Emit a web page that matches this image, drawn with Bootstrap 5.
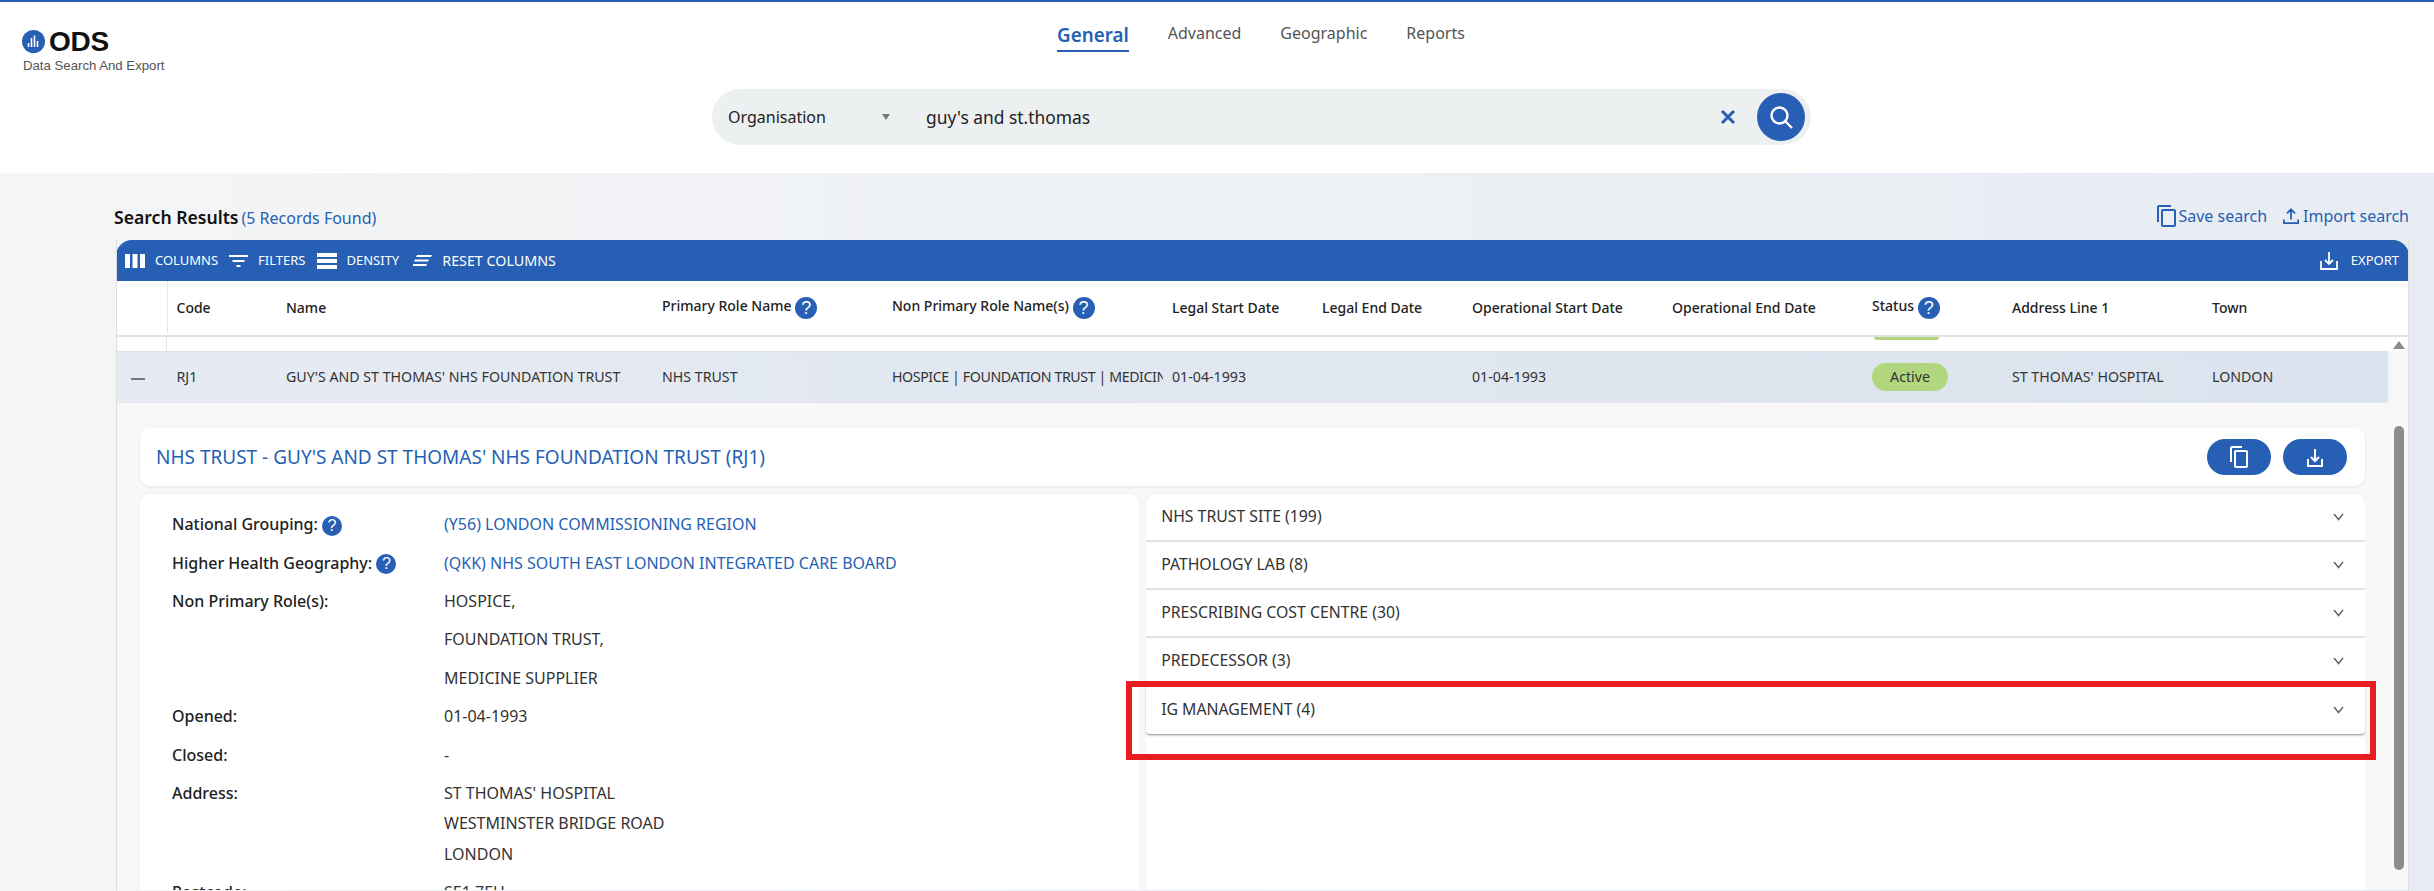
<!DOCTYPE html>
<html lang="en">
<head>
    <title>ODS Data Search And Export</title>
    <link href="https://cdn.jsdelivr.net/npm/bootstrap@5.3.0/dist/css/bootstrap.min.css" rel="stylesheet">
    <script src="https://cdn.jsdelivr.net/npm/bootstrap@5.3.0/dist/js/bootstrap.bundle.min.js"></script>
    <meta name="viewport" content="width=device-width, initial-scale=1">
    <style>
        html, body { height: 100%; overflow: hidden; }
        body {
            font-family: "Noto Sans", "Open Sans", sans-serif;
            font-size: 14px;
            color: #222;
            background: #fff;
        }
        .top-head { height: 173px; border-top: 2px solid #265fb3; position: relative; }
        .brand-box { position: absolute; left: 22px; top: 28px; }
        .brand-name { font-family: "Liberation Sans", sans-serif; font-weight: 700; font-size: 28px; line-height: 23px; color: #111; letter-spacing: -.3px; }
        .brand-sub { font-family: "Liberation Sans", sans-serif; font-size: 13.2px; color: #555; line-height: 14px; margin-top: 6px; margin-left: 1px; }
        .main-tabs { padding: 20px 0 0 88px; height: 87px; gap: 39px; }
        .main-tab { font-size: 16px; color: #555; line-height: 22px; text-decoration: none; }
        .main-tab.on { font-size: 18.8px; font-weight: 600; color: #265fb3; border-bottom: 2px solid #265fb3; height: 30px; line-height: 26px; }
        .search-pill { width: 1099px; height: 56px; border-radius: 28px; background: #edf0f1; margin-left: 712px; padding: 0 6px 0 16px; }
        .search-type { width: 198px; font-size: 16px; color: #222; }
        .search-type i { display: block; border: 4px solid transparent; border-top: 6px solid #777; border-bottom: 0; margin-right: 36px; }
        .search-text { font-size: 17.4px; color: #222; }
        .clear-icon { margin-right: 20px; }
        .search-go { width: 48px; height: 48px; border-radius: 50%; background: #265fb3; border: 0; }
        .page-body { height: 718px; padding: 0 25px 0 114px; background: linear-gradient(90deg, #f4f5f6, #e7ecf3); }
        .result-bar { height: 67px; padding-top: 31px; }
        .result-title { font-size: 17.6px; font-weight: 600; color: #111; }
        .result-count { font-size: 16px; color: #265fb3; margin-left: 3px; }
        .result-link { font-size: 16px; color: #265fb3; text-decoration: none; }
        .grid-wrap { margin-left: 2px; border-right: 1px solid #ddd; border-left: 1px solid #ddd; height: 651px; overflow: hidden; }
        .grid-tools { height: 41px; background: #265fb3; border-radius: 16px 16px 0 0; margin: 0 -1px; padding: 0 10px 0 9px; color: #fff; font-size: 13px; }
        .tool-item { margin-right: 11px; }
        .tool-item svg { margin-right: 10px; }
        .tool-item.wide { font-size: 14.3px; margin-left: 3px; }
        .export-icon { margin-right: 12px; }
        .grid-table { table-layout: fixed; width: 2270px; border-collapse: collapse; }
        .grid-table th, .grid-table td { padding: 0 0 0 9px; white-space: nowrap; overflow: hidden; }
        .grid-table th { height: 52px; font-size: 14px; font-weight: 500; color: #222; background: #fff; }
        .grid-table td { height: 51px; font-size: 14.2px; color: #333; }
        .grid-table .corner-cell { border-right: 1px solid #e6e6e6; padding-left: 14px; }
        .grid-table col:nth-child(1) { width: 50px; }
        .grid-table col:nth-child(2) { width: 110px; }
        .grid-table col:nth-child(3) { width: 376px; }
        .grid-table col:nth-child(4) { width: 230px; }
        .grid-table col:nth-child(5) { width: 280px; }
        .grid-table col:nth-child(6), .grid-table col:nth-child(7) { width: 150px; }
        .grid-table col:nth-child(8), .grid-table col:nth-child(9), .grid-table col:nth-child(11) { width: 200px; }
        .grid-table col:nth-child(10) { width: 140px; }
        .grid-table col:nth-child(12) { width: 184px; }
        .grid-head { background: #fff; border-bottom: 2px solid #e2e2e2; height: 56px; overflow: hidden; }
        .help-dot { display: inline-block; width: 22px; height: 22px; border-radius: 50%; background: #265fb3; color: #fff; font-size: 18px; line-height: 22px; text-align: center; vertical-align: middle; font-family: "Liberation Sans", sans-serif; }
        .gap-row { height: 14px; background: #fff; display: flex; }
        .gap-row .corner { width: 50px; border-right: 1px solid #e6e6e6; }
        .sliver { width: 65px; height: 3px; margin-left: 1707px; background: #b2d67f; border-radius: 0 0 8px 8px; }
        .open-row { background: linear-gradient(90deg, #e6ebf3, #dbe3ee); border-top: 1px solid #dde1e8; border-bottom: 1px solid #e4e6ea; }
        .squeezed { letter-spacing: -.4px; }
        .status-pill { display: inline-block; width: 76px; height: 28px; line-height: 27px; text-align: center; border-radius: 14px; background: #b0d67e; color: #333; }
        .detail-area { background: #f8f8f8; padding: 25px 24px 0 23px; height: 487px; overflow: hidden; }
        .detail-head { height: 58px; background: #fff; border-radius: 10px; padding: 0 18px 0 16px; box-shadow: 0 1px 3px rgba(0,0,0,.07); margin-bottom: 8px; }
        .detail-title { font-size: 19px; color: #265fb3; }
        .round-act { width: 64px; height: 36px; border-radius: 18px; background: #265fb3; border: 0; padding: 0; margin-left: 12px; }
        .info-card { width: 1000px; background: #fff; border-radius: 10px 10px 0 0; padding: 11px 32px; height: 420px; box-shadow: 0 0 3px rgba(0,0,0,.05); }
        .info-line { display: flex; min-height: 38.4px; font-size: 16px; align-items: center; }
        .info-line.tight { min-height: 30.5px; }
        .info-line.pushed { margin-top: 4px; }
        .info-key { width: 272px; font-weight: 500; color: #222; font-size: 16px; }
        .info-val { color: #333; }
        .info-val a { color: #265fb3; text-decoration: none; }
        .help-dot.mini { width: 20px; height: 20px; line-height: 20px; font-size: 16px; }
        .role-card { width: 1220px; margin-left: 7px; background: #fff; border-radius: 10px 10px 0 0; height: 420px; box-shadow: 0 0 3px rgba(0,0,0,.05); }
        .role-item { height: 48px; padding: 0 21px 1px 15px; border-bottom: 2px solid #e2e2e2; font-size: 15.8px; color: #333; }
        .role-item.last { border-bottom: 1px solid #aaa; border-radius: 0 0 4px 4px; box-shadow: 0 1px 2px rgba(0,0,0,.2); height: 49px; }
        .mark-box { position: absolute; left: -20px; top: -5px; width: 1250px; height: 79px; border: 6px solid #e81e22; pointer-events: none; }
        .scroll-rail { width: 19px; flex: none; background: #f8f8f8; }
        .rail-top { height: 14px; background: #fff; }
        .rail-arrow { width: 0; height: 0; border: 6px solid transparent; border-bottom: 8px solid #8c8c8c; border-top: 0; margin: 0 auto; }
        .rail-thumb { width: 10px; height: 444px; margin: 75px 0 0 5px; background: #8c8c8c; border-radius: 5px; }
    </style>
</head>
<body>

    <header class="top-head">
        <div class="brand-box">
            <div class="d-flex align-items-center gap-1">
                <svg width="23" height="23" viewBox="0 0 23 23"><circle cx="11.5" cy="11.5" r="11.5" fill="#265fb3"/><path d="M6.5 13v4M9.5 8v9M12.5 5.5V17M15.5 11v6" stroke="#fff" stroke-width="1.6" fill="none"/></svg>
                <span class="brand-name">ODS</span>
            </div>
            <div class="brand-sub">Data Search And Export</div>
        </div>
        <nav class="main-tabs d-flex justify-content-center align-items-start">
            <a class="main-tab on" href="#">General</a>
            <a class="main-tab" href="#">Advanced</a>
            <a class="main-tab" href="#">Geographic</a>
            <a class="main-tab" href="#">Reports</a>
        </nav>
        <div class="search-pill d-flex align-items-center">
            <div class="search-type d-flex align-items-center justify-content-between">
                <span>Organisation</span><i></i>
            </div>
            <div class="search-text flex-grow-1">guy's and st.thomas</div>
            <svg class="clear-icon" width="18" height="18" viewBox="0 0 18 18"><path d="M3 3l12 12M15 3L3 15" stroke="#265fb3" stroke-width="3" fill="none"/></svg>
            <button class="search-go d-flex align-items-center justify-content-center" type="button">
                <svg width="28" height="28" viewBox="0 0 28 28" fill="none" stroke="#fff" stroke-width="2.4"><circle cx="12.5" cy="12.5" r="8"/><path d="M18.5 18.5l6.5 6.5"/></svg>
            </button>
        </div>
    </header>

    <main class="page-body">
        <div class="result-bar d-flex justify-content-between align-items-start">
            <div><span class="result-title">Search Results</span><span class="result-count">(5 Records Found)</span></div>
            <div class="d-flex align-items-center gap-3">
                <a class="result-link d-flex align-items-center" href="#">
                    <svg width="22" height="24" viewBox="0 0 22 24" fill="none" stroke="#265fb3" stroke-width="2"><path d="M15 2H3a1 1 0 0 0-1 1v15"/><rect x="6" y="6" width="13" height="16" rx="1"/></svg>Save search
                </a>
                <a class="result-link d-flex align-items-center" href="#">
                    <svg class="me-1" width="16" height="20" viewBox="0 0 18 20" fill="none" stroke="#265fb3" stroke-width="2"><path d="M9 14V3M4.5 7L9 2.5 13.5 7M1 14v4h16v-4"/></svg>Import search
                </a>
            </div>
        </div>

        <section class="grid-wrap">
            <div class="grid-tools d-flex align-items-center justify-content-between">
                <div class="d-flex align-items-center">
                    <span class="tool-item d-flex align-items-center">
                        <svg width="20" height="14" viewBox="0 0 20 14" fill="#fff"><path d="M0 0h5v14H0zM7.5 0h5v14h-5zM15 0h5v14h-5z"/></svg>COLUMNS
                    </span>
                    <span class="tool-item d-flex align-items-center">
                        <svg width="19" height="12" viewBox="0 0 19 12" fill="#fff"><path d="M0 0h19v2H0zM3.5 5h12v2h-12zM7.5 10h4v2h-4z"/></svg>FILTERS
                    </span>
                    <span class="tool-item d-flex align-items-center">
                        <svg width="20" height="16" viewBox="0 0 20 16" fill="#fff"><path d="M0 0h20v4H0zM0 6h20v4H0zM0 12h20v4H0z"/></svg>DENSITY
                    </span>
                    <span class="tool-item wide d-flex align-items-center">
                        <svg width="19" height="11" viewBox="0 0 19 11" fill="#fff"><path d="M4 0h15l-1 2H3zM2 4.5h14L15 6.5H1zM0 9h14l-1 2H0z"/></svg>RESET COLUMNS
                    </span>
                </div>
                <span class="d-flex align-items-center">
                    <svg class="export-icon" width="20" height="18" viewBox="0 0 20 18" fill="none" stroke="#fff" stroke-width="1.8"><path d="M10 0v12M6 8l4 4 4-4M2 9v8h16V9"/></svg>EXPORT
                </span>
            </div>

            <div class="grid-head">
                <table class="grid-table">
                    <colgroup><col><col><col><col><col><col><col><col><col><col><col><col></colgroup>
                    <tr>
                        <th class="corner-cell"></th><th>Code</th><th>Name</th>
                        <th>Primary Role Name <span class="help-dot">?</span></th>
                        <th>Non Primary Role Name(s) <span class="help-dot">?</span></th>
                        <th>Legal Start Date</th><th>Legal End Date</th><th>Operational Start Date</th><th>Operational End Date</th>
                        <th>Status <span class="help-dot">?</span></th><th>Address Line 1</th><th>Town</th>
                    </tr>
                </table>
            </div>

            <div class="d-flex">
                <div class="flex-grow-1 overflow-hidden">
                    <div class="gap-row"><div class="corner"></div><div class="sliver"></div></div>
                    <table class="grid-table">
                        <colgroup><col><col><col><col><col><col><col><col><col><col><col><col></colgroup>
                        <tr class="open-row">
                            <td class="corner-cell"><svg width="14" height="2" viewBox="0 0 14 2"><path d="M0 0h14v2H0z" fill="#777"/></svg></td>
                            <td>RJ1</td><td>GUY'S AND ST THOMAS' NHS FOUNDATION TRUST</td><td>NHS TRUST</td>
                            <td class="squeezed">HOSPICE | FOUNDATION TRUST | MEDICINE SUPPLIER</td>
                            <td>01-04-1993</td><td></td><td>01-04-1993</td><td></td>
                            <td><span class="status-pill">Active</span></td><td>ST THOMAS' HOSPITAL</td><td>LONDON</td>
                        </tr>
                    </table>
                    <div class="detail-area">
                        <div class="detail-head d-flex align-items-center justify-content-between">
                            <span class="detail-title">NHS TRUST - GUY'S AND ST THOMAS' NHS FOUNDATION TRUST (RJ1)</span>
                            <div class="d-flex">
                                <button class="round-act" type="button"><svg width="20" height="24" viewBox="0 0 20 24" fill="none" stroke="#fff" stroke-width="2"><path d="M13 2H3a1 1 0 0 0-1 1v14"/><rect x="6" y="6" width="12" height="16" rx="1"/></svg></button>
                                <button class="round-act" type="button"><svg width="18" height="20" viewBox="0 0 18 20" fill="none" stroke="#fff" stroke-width="2"><path d="M9 1v12M5 9l4 4 4-4M2 11v7h14v-7"/></svg></button>
                            </div>
                        </div>
                        <div class="d-flex">
                            <div class="info-card">
                                <div class="info-line"><span class="info-key">National Grouping: <span class="help-dot mini">?</span></span><span class="info-val"><a href="#">(Y56) LONDON COMMISSIONING REGION</a></span></div>
                                <div class="info-line"><span class="info-key">Higher Health Geography: <span class="help-dot mini">?</span></span><span class="info-val"><a href="#">(QKK) NHS SOUTH EAST LONDON INTEGRATED CARE BOARD</a></span></div>
                                <div class="info-line"><span class="info-key">Non Primary Role(s):</span><span class="info-val">HOSPICE,</span></div>
                                <div class="info-line"><span class="info-key"></span><span class="info-val">FOUNDATION TRUST,</span></div>
                                <div class="info-line"><span class="info-key"></span><span class="info-val">MEDICINE SUPPLIER</span></div>
                                <div class="info-line"><span class="info-key">Opened:</span><span class="info-val">01-04-1993</span></div>
                                <div class="info-line"><span class="info-key">Closed:</span><span class="info-val">-</span></div>
                                <div class="info-line tight pushed"><span class="info-key">Address:</span><span class="info-val">ST THOMAS' HOSPITAL</span></div>
                                <div class="info-line tight"><span class="info-key"></span><span class="info-val">WESTMINSTER BRIDGE ROAD</span></div>
                                <div class="info-line tight"><span class="info-key"></span><span class="info-val">LONDON</span></div>
                                <div class="info-line pushed"><span class="info-key">Postcode:</span><span class="info-val">SE1 7EH</span></div>
                            </div>
                            <div class="role-card">
                                <div class="role-item d-flex align-items-center justify-content-between">NHS TRUST SITE (199)<svg width="11" height="8" viewBox="0 0 11 8" fill="none" stroke="#666" stroke-width="1.5"><path d="M1 1l4.5 5.5L10 1"/></svg></div>
                                <div class="role-item d-flex align-items-center justify-content-between">PATHOLOGY LAB (8)<svg width="11" height="8" viewBox="0 0 11 8" fill="none" stroke="#666" stroke-width="1.5"><path d="M1 1l4.5 5.5L10 1"/></svg></div>
                                <div class="role-item d-flex align-items-center justify-content-between">PRESCRIBING COST CENTRE (30)<svg width="11" height="8" viewBox="0 0 11 8" fill="none" stroke="#666" stroke-width="1.5"><path d="M1 1l4.5 5.5L10 1"/></svg></div>
                                <div class="role-item d-flex align-items-center justify-content-between">PREDECESSOR (3)<svg width="11" height="8" viewBox="0 0 11 8" fill="none" stroke="#666" stroke-width="1.5"><path d="M1 1l4.5 5.5L10 1"/></svg></div>
                                <div class="position-relative">
                                    <div class="role-item last d-flex align-items-center justify-content-between">IG MANAGEMENT (4)<svg width="11" height="8" viewBox="0 0 11 8" fill="none" stroke="#666" stroke-width="1.5"><path d="M1 1l4.5 5.5L10 1"/></svg></div>
                                    <div class="mark-box"></div>
                                </div>
                            </div>
                        </div>
                    </div>
                </div>
                <div class="scroll-rail">
                    <div class="rail-top pt-1"><div class="rail-arrow"></div></div>
                    <div class="rail-thumb"></div>
                </div>
            </div>
        </section>
    </main>

</body>
</html>
